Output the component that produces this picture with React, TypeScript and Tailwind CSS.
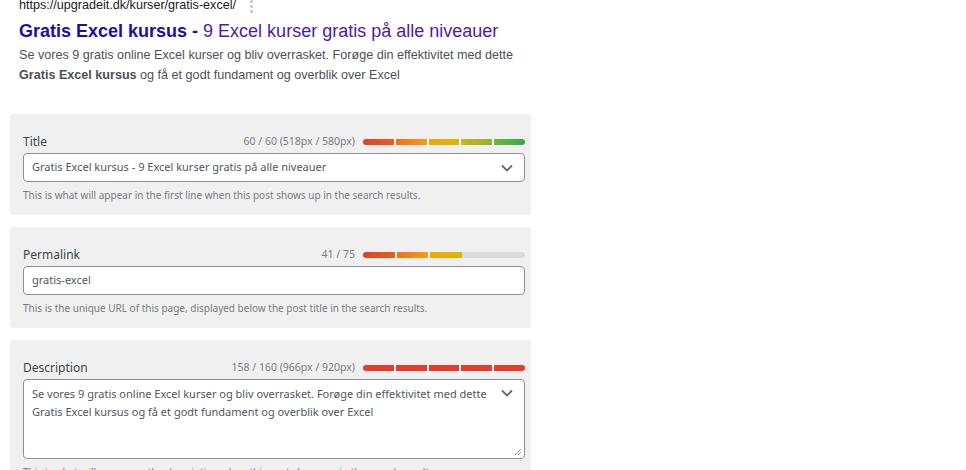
const gradients = [
  'bg-gradient-to-r from-[#e2402a] to-[#ea5c1e]',
  'bg-gradient-to-r from-[#f0701c] to-[#f59c10]',
  'bg-gradient-to-r from-[#eba90a] to-[#e0b402]',
  'bg-gradient-to-r from-[#ccb515] to-[#8db52a]',
  'bg-gradient-to-r from-[#70b53a] to-[#2fa84b]',
]

function Meter({ filled, red }: { filled: number; red?: boolean }) {
  return (
    <div className="flex w-[162px] h-[6px] rounded-full overflow-hidden bg-[#dcdcde]">
      {gradients.map((g, i) => (
        <div
          key={i}
          className={
            'flex-1 ' +
            (i < filled ? (red ? 'bg-[#e53d2b]' : g) : '') +
            (i > 0 && i < filled ? ' border-l-2 border-white' : '')
          }
        />
      ))}
    </div>
  )
}

function Chevron() {
  return (
    <svg width="14" height="14" viewBox="0 0 14 14" fill="none" stroke="#646970" strokeWidth="1.8">
      <path d="M2 4.5l5 5 5-5" />
    </svg>
  )
}

function Panel({
  label,
  counter,
  filled,
  red,
  help,
  children,
}: {
  label: string
  counter: string
  filled: number
  red?: boolean
  help: string
  children: React.ReactNode
}) {
  return (
    <section className="bg-[#f0f0f1] rounded-[3px] pl-[13px] pr-[6px] pt-[18px] pb-[13px]">
      <div className="flex items-center justify-between h-[20px] mb-[1px]">
        <span className="text-[12px] text-[#3c434a]">{label}</span>
        <div className="flex items-center gap-[8px]">
          <span className="text-[10.5px] text-[#787c82]">{counter}</span>
          <Meter filled={filled} red={red} />
        </div>
      </div>
      {children}
      <p className="mt-[6px] text-[10px] text-[#787c82] leading-[14px]">{help}</p>
    </section>
  )
}

export default function App() {
  return (
    <div className="w-[966px] h-[470px] overflow-hidden bg-white">
      <div className="pl-[19px] -mt-[4px] font-['Liberation_Sans',Arial,sans-serif]">
        <div className="flex items-center gap-[14px] h-[18px]">
          <span className="text-[12.6px] text-[#202124]">https://upgradeit.dk/kurser/gratis-excel/</span>
          <span className="flex flex-col gap-[2px] mt-[2px]">
            <span className="w-[3px] h-[3px] rounded-full bg-[#bdc1c6]" />
            <span className="w-[3px] h-[3px] rounded-full bg-[#bdc1c6]" />
            <span className="w-[3px] h-[3px] rounded-full bg-[#bdc1c6]" />
          </span>
        </div>
        <h3 className="mt-[5px] text-[18px] leading-[24px]">
          <span className="font-bold text-[#1a0dab]">Gratis Excel kursus - </span>
          <span className="text-[#4c1ba6]">9 Excel kurser gratis på alle niveauer</span>
        </h3>
        <p className="mt-[2px] text-[12.6px] leading-[20px] text-[#4d5156] w-[520px]">
          Se vores 9 gratis online Excel kurser og bliv overrasket. Forøge din effektivitet med dette{' '}
          <b className="text-[#4d5156]">Gratis Excel kursus</b> og få et godt fundament og overblik over Excel
        </p>
      </div>

      <div className="mt-[29px] ml-[10px] w-[521px] flex flex-col gap-[12px] font-['Noto_Sans',sans-serif]">
        <Panel
          label="Title"
          counter="60 / 60 (518px / 580px)"
          filled={5}
          help="This is what will appear in the first line when this post shows up in the search results."
        >
          <div className="flex items-center justify-between h-[29px] rounded-[4px] border border-[#8c8f94] bg-white pl-[8px] pr-[10px]">
            <span className="text-[11px] text-[#50575e]">Gratis Excel kursus - 9 Excel kurser gratis på alle niveauer</span>
            <Chevron />
          </div>
        </Panel>
        <Panel
          label="Permalink"
          counter="41 / 75"
          filled={3}
          help="This is the unique URL of this page, displayed below the post title in the search results."
        >
          <div className="flex items-center h-[29px] rounded-[4px] border border-[#8c8f94] bg-white pl-[8px]">
            <span className="text-[11px] text-[#50575e]">gratis-excel</span>
          </div>
        </Panel>
        <Panel
          label="Description"
          counter="158 / 160 (966px / 920px)"
          filled={5}
          red
          help="This is what will appear as the description when this post shows up in the search results."
        >
          <div className="relative h-[80px] rounded-[4px] border border-[#8c8f94] bg-white pl-[8px] pr-[10px] pt-[5px] flex justify-between">
            <p className="text-[11px] leading-[18px] text-[#50575e] w-[468px]">
              Se vores 9 gratis online Excel kurser og bliv overrasket. Forøge din effektivitet med dette Gratis Excel kursus og få et godt fundament og overblik over Excel
            </p>
            <div className="pt-[1px]">
              <Chevron />
            </div>
            <svg className="absolute right-[2px] bottom-[2px]" width="8" height="8" viewBox="0 0 8 8" stroke="#8c8f94" strokeWidth="1">
              <path d="M1 7L7 1M4 7L7 4" />
            </svg>
          </div>
        </Panel>
      </div>
    </div>
  )
}
